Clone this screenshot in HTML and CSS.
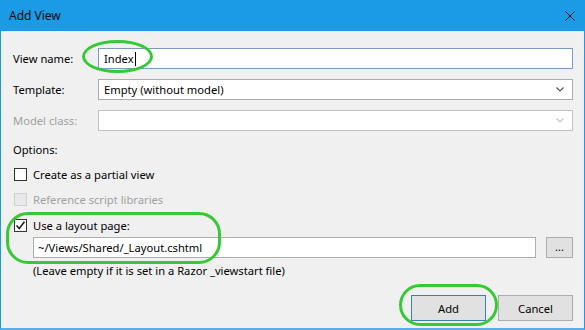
FILE: index.html
```html
<!DOCTYPE html>
<html>
<head>
<meta charset="utf-8">
<link rel="stylesheet" href="styles.css">
</head>
<body>
<div class="window">
  <div class="titlebar">
    <span class="title">Add View</span>
    <svg class="close" width="10" height="10" viewBox="0 0 10 10"><path d="M0.5 0.5L9.5 9.5M9.5 0.5L0.5 9.5" stroke="#111" stroke-width="1"/></svg>
  </div>
  <div class="body">
    <div class="field">
      <span class="lbl">View name:</span>
      <div class="input focus">Index<span class="caret"></span></div>
    </div>
    <div class="field">
      <span class="lbl">Template:</span>
      <div class="select"><span class="sel-text">Empty (without model)</span>
        <svg class="chev" width="8" height="5" viewBox="0 0 8 5"><path d="M0.5 0.5L4 4L7.5 0.5" fill="none" stroke="#555" stroke-width="1.2"/></svg>
      </div>
    </div>
    <div class="field">
      <span class="lbl dim">Model class:</span>
      <div class="select disabled"><span class="sel-text"></span>
        <svg class="chev" width="8" height="5" viewBox="0 0 8 5"><path d="M0.5 0.5L4 4L7.5 0.5" fill="none" stroke="#c4c4c4" stroke-width="1.2"/></svg>
      </div>
    </div>
    <div class="options">Options:</div>
    <div class="check c1"><span class="box"></span><span>Create as a partial view</span></div>
    <div class="check c2 dim"><span class="box off"></span><span>Reference script libraries</span></div>
    <div class="check c3"><span class="box"><svg width="11" height="11" viewBox="0 0 11 11"><path d="M1.5 5.5L4.2 8.5L9.5 1.8" fill="none" stroke="#222" stroke-width="1.6"/></svg></span><span>Use a layout page:</span></div>
    <div class="layout-row">
      <div class="input plain">~/Views/Shared/_Layout.cshtml</div>
      <div class="browse">...</div>
    </div>
    <div class="hint">(Leave empty if it is set in a Razor _viewstart file)</div>
    <div class="buttons">
      <div class="btn default">Add</div>
      <div class="btn">Cancel</div>
    </div>
  </div>
  <span class="ring ring-index"></span>
  <span class="ring ring-layout"></span>
  <span class="ring ring-add"></span>
</div>
</body>
</html>
```
FILE: styles.css
```css
html, body {
  margin: 0;
  padding: 0;
  background: #ffffff;
}
.window {
  position: relative;
  width: 585px;
  height: 330px;
  display: flex;
  flex-direction: column;
  font-family: "Noto Sans", "Open Sans", sans-serif;
  font-size: 11.2px;
  color: #000;
  overflow: hidden;
}
.titlebar {
  height: 31px;
  flex: none;
  background: #1b9ae6;
  display: flex;
  align-items: center;
  justify-content: space-between;
  padding: 0 10px 0 9px;
}
.title {
  font-size: 12px;
  color: #0a0a0a;
}
.close {
  display: block;
  margin-top: 1px;
}
.body {
  flex: 1;
  background: #f0f0f0;
  border-left: 1px solid #1b9ae6;
  border-right: 1px solid #1b9ae6;
  border-bottom: 2px solid #5aaee8;
  padding: 17px 11px 0 12px;
  display: flex;
  flex-direction: column;
}
.field {
  display: flex;
  align-items: center;
  height: 21px;
  margin-bottom: 10px;
}
.lbl {
  width: 85px;
  flex: none;
  line-height: 16px;
}
.dim {
  color: #a0a0a0;
}
.input {
  flex: 1;
  height: 21px;
  box-sizing: border-box;
  border: 1px solid #abadb3;
  background: #fff;
  padding: 0 5px;
  line-height: 19px;
  display: flex;
  align-items: center;
}
.input.focus {
  border-color: #7a9bc6;
}
.caret {
  display: inline-block;
  width: 1px;
  height: 14px;
  background: #000;
  margin-left: 1px;
}
.select {
  flex: 1;
  height: 21px;
  box-sizing: border-box;
  border: 1px solid #acacac;
  background: #fff;
  padding: 0 8px 0 5px;
  display: flex;
  align-items: center;
  justify-content: space-between;
}
.select.disabled {
  border-color: #c2c2c2;
}
.options {
  line-height: 16px;
  margin-top: 1px;
}
.check {
  display: flex;
  align-items: center;
  height: 16px;
}
.c1 { margin-top: 8px; }
.c2 { margin-top: 9px; }
.c3 { margin-top: 10px; }
.box {
  width: 13px;
  height: 13px;
  box-sizing: border-box;
  border: 1px solid #333;
  background: #fff;
  margin: 0 6px 0 1px;
  flex: none;
  display: flex;
  align-items: center;
  justify-content: center;
}
.box.off {
  border-color: #cfcfcf;
  background: #e8e8e8;
}
.layout-row {
  display: flex;
  align-items: center;
  margin-top: 4px;
  padding-left: 20px;
  height: 21px;
}
.input.plain {
  padding-left: 4px;
}
.browse {
  margin-left: 10px;
  width: 27px;
  height: 21px;
  box-sizing: border-box;
  border: 1px solid #adadad;
  background: #e1e1e1;
  display: flex;
  align-items: center;
  justify-content: center;
  font-size: 11px;
  line-height: 14px;
  padding-bottom: 2px;
}
.hint {
  margin-top: 5px;
  line-height: 16px;
  padding-left: 20px;
}
.buttons {
  margin-top: 16px;
  display: flex;
  justify-content: flex-end;
  gap: 12px;
}
.btn {
  width: 75px;
  height: 26px;
  box-sizing: border-box;
  border: 1px solid #adadad;
  background: #e1e1e1;
  display: flex;
  align-items: center;
  justify-content: center;
}
.btn.default {
  border-color: #3c7fb1;
}
.ring {
  position: absolute;
  box-sizing: border-box;
  border: 3px solid #35c935;
}
.ring-index {
  left: 82px;
  top: 40px;
  width: 71px;
  height: 33px;
  border-radius: 36px / 17px;
}
.ring-layout {
  left: 6px;
  top: 212px;
  width: 215px;
  height: 52px;
  border-radius: 22px;
}
.ring-add {
  left: 399px;
  top: 284px;
  width: 99px;
  height: 42px;
  border-radius: 21px;
}
```
